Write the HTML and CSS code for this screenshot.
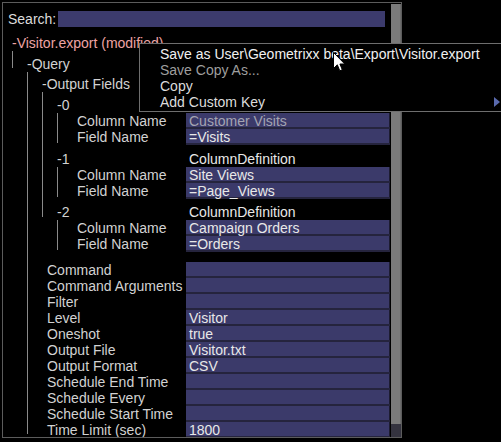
FILE: index.html
```html
<!DOCTYPE html>
<html>
<head>
<meta charset="utf-8">
<link rel="stylesheet" href="styles.css">
</head>
<body>
<div class="panel">
  <div class="content">
    <div class="search">
      <span class="search-label">Search:</span>
      <div class="search-box"></div>
    </div>
    <div class="tree">
      <div class="row h16">
        <div class="lbl"><span class="node root">-Visitor.export (modified)</span></div>
      </div>
      <div class="row h21">
        <div class="lbl"><span class="g on end4"></span><span class="node">-Query</span></div>
      </div>
      <div class="row h20">
        <div class="lbl"><span class="g"></span><span class="g on"></span><span class="node">-Output Fields</span></div>
      </div>
      <div class="row h21">
        <div class="lbl"><span class="g"></span><span class="g on"></span><span class="g on"></span><span class="node">-0</span></div>
      </div>
      <div class="row h16">
        <div class="lbl"><span class="g"></span><span class="g on"></span><span class="g on"></span><span class="g on"></span><span class="leaf">Column Name</span></div>
        <div class="val box dim">Customer Visits</div>
      </div>
      <div class="row h16">
        <div class="lbl"><span class="g"></span><span class="g on"></span><span class="g on"></span><span class="g on end2"></span><span class="leaf">Field Name</span></div>
        <div class="val box">=Visits</div>
      </div>
      <div class="row h22">
        <div class="lbl"><span class="g"></span><span class="g on"></span><span class="g on"></span><span class="node">-1</span></div>
        <div class="val plain">ColumnDefinition</div>
      </div>
      <div class="row h16">
        <div class="lbl"><span class="g"></span><span class="g on"></span><span class="g on"></span><span class="g on"></span><span class="leaf">Column Name</span></div>
        <div class="val box">Site Views</div>
      </div>
      <div class="row h16">
        <div class="lbl"><span class="g"></span><span class="g on"></span><span class="g on"></span><span class="g on end2"></span><span class="leaf">Field Name</span></div>
        <div class="val box">=Page_Views</div>
      </div>
      <div class="row h21">
        <div class="lbl"><span class="g"></span><span class="g on"></span><span class="g on end3"></span><span class="node">-2</span></div>
        <div class="val plain">ColumnDefinition</div>
      </div>
      <div class="row h16">
        <div class="lbl"><span class="g"></span><span class="g on"></span><span class="g"></span><span class="g on"></span><span class="leaf">Column Name</span></div>
        <div class="val box">Campaign Orders</div>
      </div>
      <div class="row h16">
        <div class="lbl"><span class="g"></span><span class="g on"></span><span class="g"></span><span class="g on end2"></span><span class="leaf">Field Name</span></div>
        <div class="val box">=Orders</div>
      </div>
      <div class="row h26">
        <div class="lbl"><span class="g"></span><span class="g on"></span><span class="leaf">Command</span></div>
        <div class="val box"></div>
      </div>
      <div class="row h16">
        <div class="lbl"><span class="g"></span><span class="g on"></span><span class="leaf">Command Arguments</span></div>
        <div class="val box"></div>
      </div>
      <div class="row h16">
        <div class="lbl"><span class="g"></span><span class="g on"></span><span class="leaf">Filter</span></div>
        <div class="val box"></div>
      </div>
      <div class="row h16">
        <div class="lbl"><span class="g"></span><span class="g on"></span><span class="leaf">Level</span></div>
        <div class="val box">Visitor</div>
      </div>
      <div class="row h16">
        <div class="lbl"><span class="g"></span><span class="g on"></span><span class="leaf">Oneshot</span></div>
        <div class="val box">true</div>
      </div>
      <div class="row h16">
        <div class="lbl"><span class="g"></span><span class="g on"></span><span class="leaf">Output File</span></div>
        <div class="val box">Visitor.txt</div>
      </div>
      <div class="row h16">
        <div class="lbl"><span class="g"></span><span class="g on"></span><span class="leaf">Output Format</span></div>
        <div class="val box">CSV</div>
      </div>
      <div class="row h16">
        <div class="lbl"><span class="g"></span><span class="g on"></span><span class="leaf">Schedule End Time</span></div>
        <div class="val box"></div>
      </div>
      <div class="row h16">
        <div class="lbl"><span class="g"></span><span class="g on"></span><span class="leaf">Schedule Every</span></div>
        <div class="val box"></div>
      </div>
      <div class="row h16">
        <div class="lbl"><span class="g"></span><span class="g on"></span><span class="leaf">Schedule Start Time</span></div>
        <div class="val box"></div>
      </div>
      <div class="row h16">
        <div class="lbl"><span class="g"></span><span class="g on end4"></span><span class="leaf">Time Limit (sec)</span></div>
        <div class="val box">1800</div>
      </div>
    </div>
  </div>
  <div class="scroll">
    <div class="thumb"></div>
    <div class="track"></div>
  </div>
</div>

<div class="menu">
  <div class="item bright">Save as User\Geometrixx beta\Export\Visitor.export</div>
  <div class="item faded">Save Copy As...</div>
  <div class="item">Copy</div>
  <div class="item">Add Custom Key<span class="arrow"></span></div>
</div>

<svg class="cursor" width="13" height="20" viewBox="0 0 13 20">
  <path d="M0.5 0.5 L0.5 16.5 L4.3 12.8 L6.8 18.8 L9.3 17.7 L6.9 12 L11.8 12 Z" fill="#ffffff" stroke="#000000" stroke-width="1" stroke-linejoin="miter"/>
</svg>
</body>
</html>
```

FILE: styles.css
```css
html, body {
  margin: 0;
  padding: 0;
  background: #000;
}
body {
  width: 501px;
  height: 442px;
  overflow: hidden;
  position: relative;
  font-family: "Liberation Sans", Arial, sans-serif;
  font-size: 14px;
  color: #d6d6d6;
}
.panel {
  margin: 2px 0 0 2px;
  width: 398px;
  height: 434px;
  border: 1px solid #5c5c5c;
  display: flex;
}
.content {
  width: 388px;
  overflow: hidden;
}
.search {
  display: flex;
  padding: 8px 0 8px 5px;
  height: 16px;
}
.search-label {
  width: 50px;
  line-height: 16px;
  color: #dcdcdc;
}
.search-box {
  width: 327px;
  height: 16px;
  background: #3c3b6d;
}
.row {
  display: flex;
}
.h16 { height: 16px; }
.h20 { height: 20px; }
.h21 { height: 21px; }
.h22 { height: 22px; }
.h26 { height: 26px; }
.lbl {
  flex: 0 0 183px;
  box-sizing: border-box;
  padding-left: 9px;
  display: flex;
  align-items: stretch;
}
.g {
  flex: 0 0 15px;
  box-sizing: border-box;
}
.g.on {
  border-left: 1px solid #8a8a8a;
}
.g.end2 { margin-bottom: 2px; }
.g.end3 { margin-bottom: 3px; }
.g.end4 { margin-bottom: 4px; }
.node, .leaf {
  align-self: flex-end;
  line-height: 16px;
  white-space: nowrap;
  color: #d2d2d2;
}
.leaf {
  padding-left: 5px;
}
.root {
  color: #eea4a4;
}
.val {
  flex: 0 0 204px;
  box-sizing: border-box;
  align-self: flex-end;
  height: 16px;
  line-height: 16px;
  padding-left: 3px;
  color: #e8e8e8;
  white-space: nowrap;
  overflow: hidden;
}
.val.box {
  background: #3b3a6a;
  box-shadow: inset 0 -2px 0 #25243d, inset -1px 0 0 #1d1c31;
}
.val.dim {
  color: #a4a4b2;
}
.scroll {
  width: 10px;
  margin-top: 1px;
  display: flex;
  flex-direction: column;
}
.thumb {
  flex: 1;
  background: #7b7b7b;
  box-shadow: inset -1px 0 0 #6c6c6c;
}
.track {
  height: 13px;
  background: #34333f;
}
.menu {
  position: absolute;
  left: 139px;
  top: 43px;
  width: 378px;
  border: 1px solid #6e6e6e;
  background: #000;
  padding: 2px 0 1px 0;
}
.item {
  display: flex;
  align-items: center;
  height: 16px;
  line-height: 16px;
  padding-left: 20px;
  color: #dcdcdc;
  white-space: nowrap;
}
.item.bright {
  color: #f0f0f0;
}
.item.faded {
  color: #9e9e9e;
}
.arrow {
  margin-left: auto;
  margin-right: 18px;
  width: 0;
  height: 0;
  border-left: 6px solid #5a6aae;
  border-top: 5px solid transparent;
  border-bottom: 5px solid transparent;
}
.cursor {
  position: absolute;
  left: 333px;
  top: 52px;
}
```
